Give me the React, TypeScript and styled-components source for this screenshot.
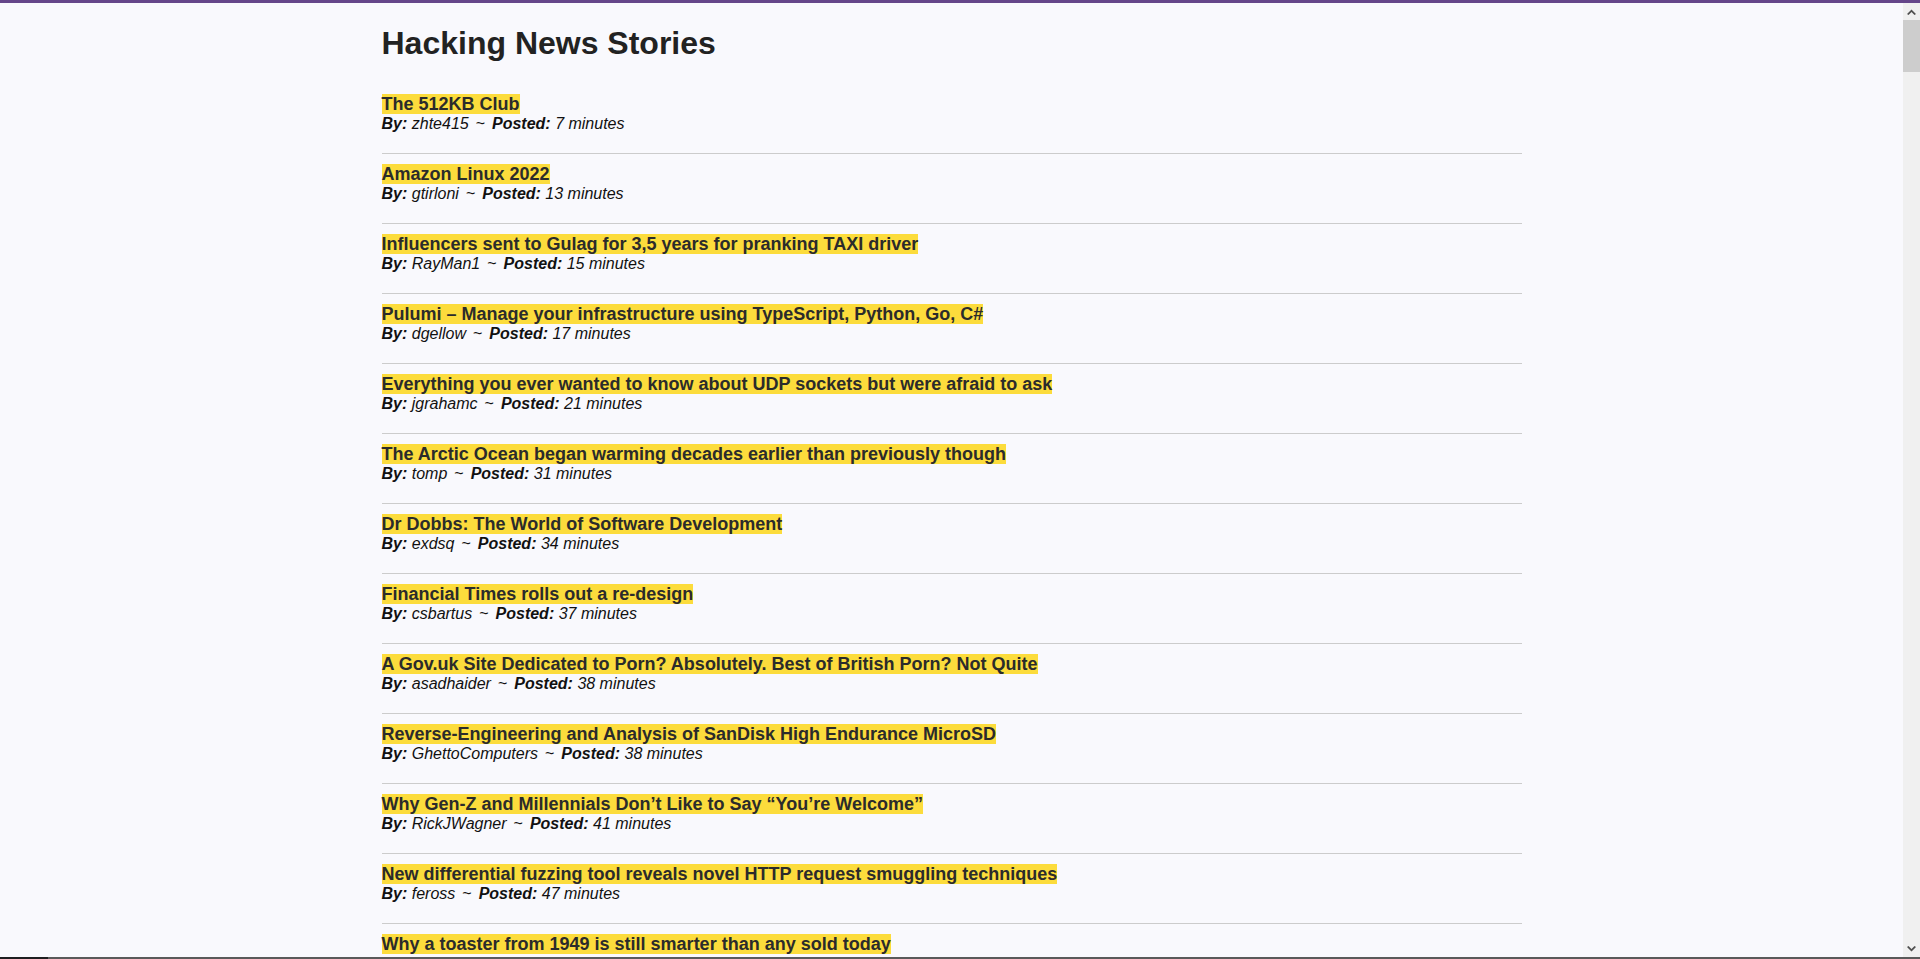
import React from 'react';
import styled, { createGlobalStyle } from 'styled-components';

const GlobalStyle = createGlobalStyle`
  html, body {
    margin: 0;
    padding: 0;
    background: #f9f9fd;
  }
  body {
    font-family: "Liberation Sans", Arial, sans-serif;
    color: #222;
  }
`;

const Page = styled.div`
  border-top: 3px solid #65468a;
  padding-right: 17px;
  min-height: 100vh;
`;

const Container = styled.main`
  max-width: 1140px;
  margin: 0 auto;
`;

const Heading = styled.h1`
  font-size: 32px;
  font-weight: bold;
  color: #222;
  margin: 22px 0 21px;
`;

const List = styled.ul`
  list-style: none;
  margin: 0;
  padding: 1px 0 0;
`;

const Item = styled.li`
  padding: 10px 0 20px;
  border-bottom: 1px solid #cccccc;
`;

const Title = styled.a`
  font-size: 18px;
  font-weight: bold;
  color: #2b2b2b;
  background: #fcdc3c;
  text-decoration: none;
`;

const Meta = styled.div`
  font-size: 16px;
  font-style: italic;
  color: #111;
`;

const Label = styled.b`
  font-weight: bold;
`;

const Sep = styled.span`
  font-style: normal;
  margin: 0 7px;
`;

// browser chrome drawn over the page: scrollbar and the window's bottom edge
const Scrollbar = styled.div`
  position: fixed;
  top: 3px;
  right: 0;
  bottom: 2px;
  width: 17px;
  background: #f0f0f0;
  display: flex;
  flex-direction: column;
  align-items: stretch;
`;

const Arrow = styled.div`
  height: 17px;
  display: flex;
  align-items: center;
  justify-content: center;
`;

const Thumb = styled.div`
  height: 52px;
  background: #cdcdcd;
`;

const Track = styled.div`
  flex: 1;
`;

const BottomEdge = styled.div`
  position: fixed;
  left: 0;
  right: 0;
  bottom: 0;
  height: 2px;
  background: linear-gradient(to right, #1e1e20 0, #1e1e20 48px, #5a5a5a 48px);
`;

const Chevron = ({ up }: { up?: boolean }) => (
  <svg width="9" height="6" viewBox="0 0 9 6">
    <path
      d={up ? 'M0 5 L4.5 0.5 L9 5 L7.5 6 L4.5 3 L1.5 6 Z' : 'M0 1 L4.5 5.5 L9 1 L7.5 0 L4.5 3 L1.5 0 Z'}
      fill="#505050"
    />
  </svg>
);

const stories: [string, string, string][] = [
  ['The 512KB Club', 'zhte415', '7 minutes'],
  ['Amazon Linux 2022', 'gtirloni', '13 minutes'],
  ['Influencers sent to Gulag for 3,5 years for pranking TAXI driver', 'RayMan1', '15 minutes'],
  ['Pulumi – Manage your infrastructure using TypeScript, Python, Go, C#', 'dgellow', '17 minutes'],
  ['Everything you ever wanted to know about UDP sockets but were afraid to ask', 'jgrahamc', '21 minutes'],
  ['The Arctic Ocean began warming decades earlier than previously though', 'tomp', '31 minutes'],
  ['Dr Dobbs: The World of Software Development', 'exdsq', '34 minutes'],
  ['Financial Times rolls out a re-design', 'csbartus', '37 minutes'],
  ['A Gov.uk Site Dedicated to Porn? Absolutely. Best of British Porn? Not Quite', 'asadhaider', '38 minutes'],
  ['Reverse-Engineering and Analysis of SanDisk High Endurance MicroSD', 'GhettoComputers', '38 minutes'],
  ['Why Gen-Z and Millennials Don’t Like to Say “You’re Welcome”', 'RickJWagner', '41 minutes'],
  ['New differential fuzzing tool reveals novel HTTP request smuggling techniques', 'feross', '47 minutes'],
  ['Why a toaster from 1949 is still smarter than any sold today', 'zdw', '52 minutes'],
];

export default function App() {
  return (
    <Page>
      <GlobalStyle />
      <Container>
        <Heading>Hacking News Stories</Heading>
        <List>
          {stories.map(([title, by, posted], i) => (
            <Item key={i}>
              <Title href="#">{title}</Title>
              <Meta>
                <Label>By:</Label> {by}
                <Sep>~</Sep>
                <Label>Posted:</Label> {posted}
              </Meta>
            </Item>
          ))}
        </List>
      </Container>
      <Scrollbar>
        <Arrow><Chevron up /></Arrow>
        <Thumb />
        <Track />
        <Arrow><Chevron /></Arrow>
      </Scrollbar>
      <BottomEdge />
    </Page>
  );
}
